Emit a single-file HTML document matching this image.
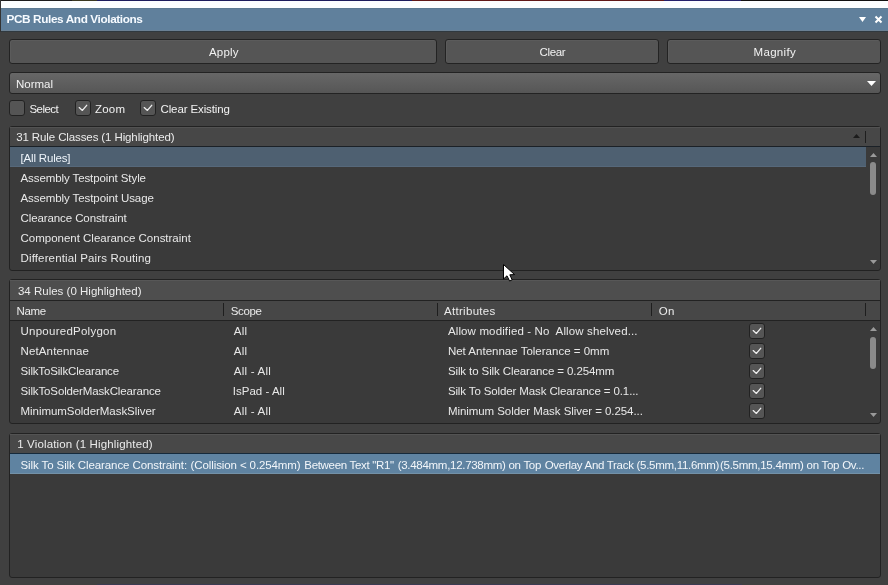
<!DOCTYPE html>
<html><head><meta charset="utf-8">
<style>
*{box-sizing:border-box;margin:0;padding:0}
html,body{width:888px;height:585px;overflow:hidden;background:#404040;font-family:"Liberation Sans",sans-serif;font-size:11.5px;color:#e6e6e6}
.a{position:absolute}
.tx{position:absolute;white-space:pre;line-height:20px;font-family:"Liberation Sans",sans-serif}
.cb{position:absolute;border:1px solid #222;border-radius:3px;background:#555}
</style></head><body>
<div class="a" style="left:0px;top:0px;width:888px;height:1px;background:#1c1c1c;"></div>
<div class="a" style="left:72px;top:0px;width:25px;height:1px;background:#3a3820;"></div>
<div class="a" style="left:97px;top:0px;width:315px;height:1px;background:#1c1c5c;"></div>
<div class="a" style="left:412px;top:0px;width:252px;height:1px;background:#601818;"></div>
<div class="a" style="left:664px;top:0px;width:77px;height:1px;background:#24206a;"></div>
<div class="a" style="left:741px;top:0px;width:147px;height:1px;background:#101010;"></div>
<div class="a" style="left:1px;top:1px;width:887px;height:7px;background:#fbfeff;"></div>
<div class="a" style="left:0px;top:0px;width:1px;height:32px;background:#333;"></div>
<div class="a" style="left:1px;top:8px;width:887px;height:23px;background:#60809c;"></div>
<div class="a" style="left:1px;top:8px;width:887px;height:1px;background:#5b7a92;"></div>
<div class="a" style="left:1px;top:30px;width:887px;height:1px;background:#6a8093;"></div>
<div class="a" style="left:1px;top:31px;width:887px;height:1px;background:#30393f;"></div>
<svg class="a" style="left:859px;top:17px" width="7" height="5" viewBox="0 0 7 5"><path d="M0 0H7L3.5 5Z" fill="#fff"/></svg>
<svg class="a" style="left:874px;top:15px" width="9" height="9" viewBox="0 0 9 9"><path d="M1.5 1.5L7.5 7.5M7.5 1.5L1.5 7.5" stroke="#fff" stroke-width="2"/></svg>
<div class="a" style="left:9px;top:39px;width:428px;height:25px;background:#555;border:1px solid #232323;border-radius:3px;box-shadow:inset 1px 1px 0 #5b5b5b"></div>
<div class="a" style="left:445px;top:39px;width:214px;height:25px;background:#555;border:1px solid #232323;border-radius:3px;box-shadow:inset 1px 1px 0 #5b5b5b"></div>
<div class="a" style="left:667px;top:39px;width:214px;height:25px;background:#555;border:1px solid #232323;border-radius:3px;box-shadow:inset 1px 1px 0 #5b5b5b"></div>
<div class="a" style="left:9px;top:72px;width:872px;height:22px;background:linear-gradient(#676767,#565656);border:1px solid #232323;border-radius:3px"></div>
<svg class="a" style="left:867px;top:81px" width="9" height="5" viewBox="0 0 9 5"><path d="M0 0H9L4.5 5Z" fill="#fff"/></svg>
<div class="cb" style="left:9px;top:100px;width:16px;height:16px"></div>
<div class="cb" style="left:75px;top:100px;width:16px;height:16px"></div><svg class="a" style="left:75px;top:100px" width="16" height="16" viewBox="0 0 16 16"><path d="M4.2 7.6 L7.4 10.4 L11.7 5.3" fill="none" stroke="#f0f0f0" stroke-width="1.3" stroke-linecap="round" stroke-linejoin="round"/></svg>
<div class="cb" style="left:140px;top:100px;width:16px;height:16px"></div><svg class="a" style="left:140px;top:100px" width="16" height="16" viewBox="0 0 16 16"><path d="M4.2 7.6 L7.4 10.4 L11.7 5.3" fill="none" stroke="#f0f0f0" stroke-width="1.3" stroke-linecap="round" stroke-linejoin="round"/></svg>
<div class="a" style="left:9px;top:126px;width:872px;height:145px;background:#3a3a3a;border:1px solid #222;border-radius:3px"></div>
<div class="a" style="left:10px;top:127px;width:870px;height:19px;background:#474747;box-shadow:inset 0 1px 0 #525252"></div>
<div class="a" style="left:10px;top:146px;width:870px;height:1px;background:#1b2127;"></div>
<div class="a" style="left:10px;top:147px;width:856px;height:20px;background:#4e6071;box-shadow:inset 0 -1px 0 #56687a"></div>
<svg class="a" style="left:853px;top:134px" width="7" height="4" viewBox="0 0 7 4"><path d="M0 4H7L3.5 0Z" fill="#1c1c1c"/></svg>
<div class="a" style="left:865px;top:131px;width:1px;height:12px;background:#1e1e1e;"></div>
<svg class="a" style="left:870px;top:153px" width="7" height="4" viewBox="0 0 7 4"><path d="M0 4H7L3.5 0Z" fill="#9a9a9a"/></svg>
<div class="a" style="left:870px;top:162px;width:6px;height:33px;background:#8a8a8a;border-radius:3px"></div>
<svg class="a" style="left:870px;top:260px" width="7" height="4" viewBox="0 0 7 4"><path d="M0 0H7L3.5 4Z" fill="#9a9a9a"/></svg>
<div class="a" style="left:9px;top:279px;width:872px;height:145px;background:#3a3a3a;border:1px solid #222;border-radius:3px"></div>
<div class="a" style="left:10px;top:280px;width:870px;height:20px;background:#4e4e4e;box-shadow:inset 0 1px 0 #575757"></div>
<div class="a" style="left:10px;top:300px;width:870px;height:1px;background:#222;"></div>
<div class="a" style="left:10px;top:301px;width:870px;height:19px;background:#474747;"></div>
<div class="a" style="left:10px;top:320px;width:870px;height:1px;background:#222;"></div>
<div class="a" style="left:223px;top:303px;width:1px;height:13px;background:#1e1e1e;"></div>
<div class="a" style="left:437px;top:303px;width:1px;height:13px;background:#1e1e1e;"></div>
<div class="a" style="left:651px;top:303px;width:1px;height:13px;background:#1e1e1e;"></div>
<div class="a" style="left:865px;top:303px;width:1px;height:13px;background:#1e1e1e;"></div>
<div class="cb" style="left:749px;top:323px;width:16px;height:16px"></div><svg class="a" style="left:749px;top:323px" width="16" height="16" viewBox="0 0 16 16"><path d="M4.2 7.6 L7.4 10.4 L11.7 5.3" fill="none" stroke="#f0f0f0" stroke-width="1.3" stroke-linecap="round" stroke-linejoin="round"/></svg>
<div class="cb" style="left:749px;top:343px;width:16px;height:16px"></div><svg class="a" style="left:749px;top:343px" width="16" height="16" viewBox="0 0 16 16"><path d="M4.2 7.6 L7.4 10.4 L11.7 5.3" fill="none" stroke="#f0f0f0" stroke-width="1.3" stroke-linecap="round" stroke-linejoin="round"/></svg>
<div class="cb" style="left:749px;top:363px;width:16px;height:16px"></div><svg class="a" style="left:749px;top:363px" width="16" height="16" viewBox="0 0 16 16"><path d="M4.2 7.6 L7.4 10.4 L11.7 5.3" fill="none" stroke="#f0f0f0" stroke-width="1.3" stroke-linecap="round" stroke-linejoin="round"/></svg>
<div class="cb" style="left:749px;top:383px;width:16px;height:16px"></div><svg class="a" style="left:749px;top:383px" width="16" height="16" viewBox="0 0 16 16"><path d="M4.2 7.6 L7.4 10.4 L11.7 5.3" fill="none" stroke="#f0f0f0" stroke-width="1.3" stroke-linecap="round" stroke-linejoin="round"/></svg>
<div class="cb" style="left:749px;top:403px;width:16px;height:16px"></div><svg class="a" style="left:749px;top:403px" width="16" height="16" viewBox="0 0 16 16"><path d="M4.2 7.6 L7.4 10.4 L11.7 5.3" fill="none" stroke="#f0f0f0" stroke-width="1.3" stroke-linecap="round" stroke-linejoin="round"/></svg>
<svg class="a" style="left:870px;top:327px" width="7" height="4" viewBox="0 0 7 4"><path d="M0 4H7L3.5 0Z" fill="#9a9a9a"/></svg>
<div class="a" style="left:870px;top:337px;width:6px;height:32px;background:#8a8a8a;border-radius:3px"></div>
<svg class="a" style="left:870px;top:413px" width="7" height="4" viewBox="0 0 7 4"><path d="M0 0H7L3.5 4Z" fill="#9a9a9a"/></svg>
<div class="a" style="left:9px;top:433px;width:872px;height:145px;background:#3a3a3a;border:1px solid #222;border-radius:3px"></div>
<div class="a" style="left:10px;top:434px;width:870px;height:19px;background:#484848;box-shadow:inset 0 1px 0 #535353"></div>
<div class="a" style="left:10px;top:453px;width:870px;height:1px;background:#15293a;"></div>
<div class="a" style="left:10px;top:454px;width:870px;height:20px;background:#5f83a1;box-shadow:inset 0 -1px 0 #7391a7"></div>
<div class="a" style="left:97px;top:584px;width:645px;height:1px;background:#3b3b52;"></div>
<div class="a" style="left:0;top:0;width:888px;height:585px;will-change:transform"><span class="tx" style="left:6.50px;top:9.00px;font-size:11.8px;letter-spacing:-0.395px;color:#f6faff;font-weight:bold">PCB Rules And Violations</span>
<span class="tx" style="left:209.00px;top:42.00px;font-size:11.5px;letter-spacing:0.196px;color:#f2f2f2;font-weight:normal">Apply</span>
<span class="tx" style="left:539.50px;top:42.00px;font-size:11.5px;letter-spacing:-0.338px;color:#f2f2f2;font-weight:normal">Clear</span>
<span class="tx" style="left:753.60px;top:42.00px;font-size:11.5px;letter-spacing:0.300px;color:#f2f2f2;font-weight:normal">Magnify</span>
<span class="tx" style="left:15.90px;top:74.00px;font-size:11.5px;letter-spacing:0.019px;color:#f2f2f2;font-weight:normal">Normal</span>
<span class="tx" style="left:29.40px;top:99.00px;font-size:11.5px;letter-spacing:-0.533px;color:#f2f2f2;font-weight:normal">Select</span>
<span class="tx" style="left:94.90px;top:99.00px;font-size:11.5px;letter-spacing:0.228px;color:#f2f2f2;font-weight:normal">Zoom</span>
<span class="tx" style="left:160.50px;top:99.00px;font-size:11.5px;letter-spacing:-0.119px;color:#f2f2f2;font-weight:normal">Clear Existing</span>
<span class="tx" style="left:16.20px;top:127.00px;font-size:11.5px;letter-spacing:-0.110px;color:#ebebeb;font-weight:normal">31 Rule Classes (1 Highlighted)</span>
<span class="tx" style="left:20.50px;top:148.00px;font-size:11.5px;letter-spacing:-0.177px;color:#eef4fa;font-weight:normal">[All Rules]</span>
<span class="tx" style="left:20.50px;top:168.00px;font-size:11.5px;letter-spacing:-0.093px;color:#e8e8e8;font-weight:normal">Assembly Testpoint Style</span>
<span class="tx" style="left:20.50px;top:188.00px;font-size:11.5px;letter-spacing:-0.083px;color:#e8e8e8;font-weight:normal">Assembly Testpoint Usage</span>
<span class="tx" style="left:20.50px;top:208.00px;font-size:11.5px;letter-spacing:-0.096px;color:#e8e8e8;font-weight:normal">Clearance Constraint</span>
<span class="tx" style="left:20.50px;top:228.00px;font-size:11.5px;letter-spacing:-0.010px;color:#e8e8e8;font-weight:normal">Component Clearance Constraint</span>
<span class="tx" style="left:20.50px;top:248.00px;font-size:11.5px;letter-spacing:0.140px;color:#e8e8e8;font-weight:normal">Differential Pairs Routing</span>
<span class="tx" style="left:17.90px;top:281.00px;font-size:11.5px;letter-spacing:0.011px;color:#ebebeb;font-weight:normal">34 Rules (0 Highlighted)</span>
<span class="tx" style="left:16.50px;top:301.00px;font-size:11.5px;letter-spacing:-0.360px;color:#ebebeb;font-weight:normal">Name</span>
<span class="tx" style="left:230.80px;top:301.00px;font-size:11.5px;letter-spacing:-0.353px;color:#ebebeb;font-weight:normal">Scope</span>
<span class="tx" style="left:444.00px;top:301.00px;font-size:11.5px;letter-spacing:0.300px;color:#ebebeb;font-weight:normal">Attributes</span>
<span class="tx" style="left:658.80px;top:301.00px;font-size:11.5px;letter-spacing:0.300px;color:#ebebeb;font-weight:normal">On</span>
<span class="tx" style="left:20.50px;top:321.00px;font-size:11.5px;letter-spacing:0.252px;color:#e8e8e8;font-weight:normal">UnpouredPolygon</span>
<span class="tx" style="left:233.80px;top:321.00px;font-size:11.5px;letter-spacing:0.300px;color:#e8e8e8;font-weight:normal">All</span>
<span class="tx" style="left:447.90px;top:321.00px;font-size:11.5px;letter-spacing:0.137px;color:#e8e8e8;font-weight:normal">Allow modified - No  Allow shelved...</span>
<span class="tx" style="left:20.50px;top:341.00px;font-size:11.5px;letter-spacing:0.136px;color:#e8e8e8;font-weight:normal">NetAntennae</span>
<span class="tx" style="left:233.80px;top:341.00px;font-size:11.5px;letter-spacing:0.300px;color:#e8e8e8;font-weight:normal">All</span>
<span class="tx" style="left:447.90px;top:341.00px;font-size:11.5px;letter-spacing:0.005px;color:#e8e8e8;font-weight:normal">Net Antennae Tolerance = 0mm</span>
<span class="tx" style="left:20.50px;top:361.00px;font-size:11.5px;letter-spacing:-0.168px;color:#e8e8e8;font-weight:normal">SilkToSilkClearance</span>
<span class="tx" style="left:233.80px;top:361.00px;font-size:11.5px;letter-spacing:0.222px;color:#e8e8e8;font-weight:normal">All - All</span>
<span class="tx" style="left:447.90px;top:361.00px;font-size:11.5px;letter-spacing:-0.104px;color:#e8e8e8;font-weight:normal">Silk to Silk Clearance = 0.254mm</span>
<span class="tx" style="left:20.50px;top:381.00px;font-size:11.5px;letter-spacing:-0.138px;color:#e8e8e8;font-weight:normal">SilkToSolderMaskClearance</span>
<span class="tx" style="left:232.80px;top:381.00px;font-size:11.5px;letter-spacing:0.015px;color:#e8e8e8;font-weight:normal">IsPad - All</span>
<span class="tx" style="left:447.90px;top:381.00px;font-size:11.5px;letter-spacing:-0.121px;color:#e8e8e8;font-weight:normal">Silk To Solder Mask Clearance = 0.1...</span>
<span class="tx" style="left:20.50px;top:401.00px;font-size:11.5px;letter-spacing:-0.045px;color:#e8e8e8;font-weight:normal">MinimumSolderMaskSliver</span>
<span class="tx" style="left:233.80px;top:401.00px;font-size:11.5px;letter-spacing:0.222px;color:#e8e8e8;font-weight:normal">All - All</span>
<span class="tx" style="left:447.90px;top:401.00px;font-size:11.5px;letter-spacing:-0.060px;color:#e8e8e8;font-weight:normal">Minimum Solder Mask Sliver = 0.254...</span>
<span class="tx" style="left:17.20px;top:434.00px;font-size:11.5px;letter-spacing:0.152px;color:#ebebeb;font-weight:normal">1 Violation (1 Highlighted)</span>
<span class="tx" style="left:20.50px;top:455.00px;font-size:11.5px;letter-spacing:-0.097px;color:#f2f6fa;font-weight:normal">Silk To Silk Clearance Constraint:</span>
<span class="tx" style="left:190.60px;top:455.00px;font-size:11.5px;letter-spacing:-0.107px;color:#f2f6fa;font-weight:normal">(Collision &lt; 0.254mm)</span>
<span class="tx" style="left:304.30px;top:455.00px;font-size:11.5px;letter-spacing:-0.320px;color:#f2f6fa;font-weight:normal">Between Text "R1"</span>
<span class="tx" style="left:397.70px;top:455.00px;font-size:11.5px;letter-spacing:-0.290px;color:#f2f6fa;font-weight:normal">(3.484mm,12.738mm) on Top</span>
<span class="tx" style="left:544.70px;top:455.00px;font-size:11.5px;letter-spacing:-0.295px;color:#f2f6fa;font-weight:normal">Overlay And Track (5.5mm,11.6mm)</span>
<span class="tx" style="left:720.00px;top:455.00px;font-size:11.5px;letter-spacing:-0.277px;color:#f2f6fa;font-weight:normal">(5.5mm,15.4mm) on Top Ov...</span></div>
<svg class="a" style="left:502px;top:263px" width="14" height="19" viewBox="0 0 14 19"><path d="M1.5 1.5 L1.5 16 L5 12.8 L7.6 18 L10.2 16.9 L7.8 11.8 L12.6 11.6 Z" fill="#fff" stroke="#000" stroke-width="1" stroke-linejoin="miter"/></svg>
</body></html>
